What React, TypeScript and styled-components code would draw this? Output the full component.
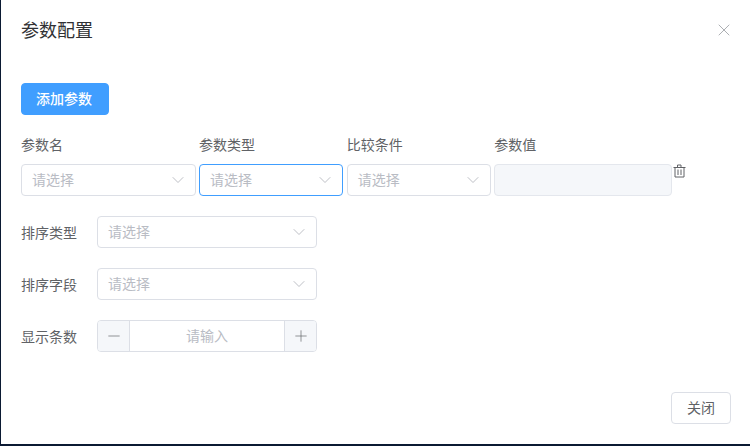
import styled, { createGlobalStyle } from "styled-components"
import { ChevronDown, Minus, Plus, X } from "lucide-react"

const GlobalStyle = createGlobalStyle`
    html, body {
        margin: 0;
        padding: 0;
        background: #0b1a33;
    }
    * {
        box-sizing: border-box;
    }
`;

const Dialog = styled.div`
    width: 749px;
    height: 444px;
    margin-left: 1px;
    background: #fff;
    display: flex;
    flex-direction: column;
    font-family: "Liberation Sans", "Noto Sans CJK SC", sans-serif;
    font-size: 14px;
    color: #606266;
    overflow: hidden;
`;

const Header = styled.div`
    height: 83px;
    padding: 20px 20px 0;
    display: flex;
    justify-content: space-between;
    align-items: flex-start;
`;

const Title = styled.span`
    font-size: 18px;
    line-height: 21px;
    margin-top: 1px;
    color: #303133;
`;

const CloseButton = styled.span`
    display: flex;
    margin: 0 -4px 0 0;
    color: #909399;
`;

const Body = styled.div`
    flex: 1;
    padding: 0 20px;
    display: flex;
    flex-direction: column;
    align-items: flex-start;
`;

const PrimaryButton = styled.button`
    width: 88px;
    height: 32px;
    padding: 0 2px 2px 0;
    background: #409eff;
    border: 1px solid #409eff;
    border-radius: 4px;
    color: #fff;
    font: inherit;
    font-weight: 500;
`;

const ParamGrid = styled.div`
    margin-top: 20px;
    display: grid;
    grid-template-columns: 174.6px 144.4px 144px 178px 16px;
    column-gap: 3.4px;
    row-gap: 9px;
`;

const ColumnLabel = styled.span`
    line-height: 20px;
    height: 20px;
`;

const SelectBox = styled.div<{ $focused?: boolean; $width?: string }>`
    width: ${props => props.$width || "100%"};
    height: 32px;
    padding: 0 10px;
    background: #fff;
    border: 1px solid ${props => props.$focused ? "#409eff" : "#dcdfe6"};
    border-radius: 4px;
    display: flex;
    align-items: center;
    justify-content: space-between;
    color: #b9bcc4;
    svg {
        margin-right: -3px;
    }
`;

const SelectText = styled.span`
    margin-top: -2px;
`;

const DisabledInput = styled.div`
    height: 32px;
    background: #f5f7fa;
    border: 1px solid #e4e7ed;
    border-radius: 4px;
`;

const TrashIcon = styled.svg`
    display: block;
    margin-left: -3px;
    color: #606266;
`;

const FormArea = styled.div`
    margin-top: 20px;
    display: flex;
    flex-direction: column;
    gap: 20px;
`;

const FormRow = styled.div`
    display: flex;
    align-items: center;
    height: 32px;
`;

const FormLabel = styled.span`
    width: 76px;
`;

const NumberInput = styled.div`
    width: 220px;
    height: 32px;
    border: 1px solid #dcdfe6;
    border-radius: 4px;
    display: flex;
    align-items: stretch;
`;

const StepButton = styled.span<{ $side: "left" | "right" }>`
    width: 32px;
    background: #f5f7fa;
    color: #606266;
    display: flex;
    align-items: center;
    justify-content: center;
    border-radius: ${props => props.$side === "left" ? "3px 0 0 3px" : "0 3px 3px 0"};
    ${props => props.$side === "left" ? "border-right" : "border-left"}: 1px solid #dcdfe6;
`;

const NumberPlaceholder = styled.span`
    flex: 1;
    text-align: center;
    line-height: 30px;
    color: #b9bcc4;
`;

const Footer = styled.div`
    padding: 0 19px 20px 0;
    display: flex;
    justify-content: flex-end;
`;

const DefaultButton = styled.button`
    width: 60px;
    height: 32px;
    padding: 0 0 2px;
    background: #fff;
    border: 1px solid #dcdfe6;
    border-radius: 4px;
    color: #606266;
    font: inherit;
`;

const Select = ({ focused, width }: { focused?: boolean; width?: string }) => (
    <SelectBox $focused={focused} $width={width}>
        <SelectText>请选择</SelectText>
        <ChevronDown size={20} strokeWidth={0.9} color="#a8abb2" />
    </SelectBox>
);

const App = () => {
    return (
        <>
            <GlobalStyle />
            <Dialog>
                <Header>
                    <Title>参数配置</Title>
                    <CloseButton><X size={20} strokeWidth={0.9} /></CloseButton>
                </Header>
                <Body>
                    <PrimaryButton type="button">添加参数</PrimaryButton>
                    <ParamGrid>
                        <ColumnLabel>参数名</ColumnLabel>
                        <ColumnLabel>参数类型</ColumnLabel>
                        <ColumnLabel>比较条件</ColumnLabel>
                        <ColumnLabel>参数值</ColumnLabel>
                        <span />
                        <Select />
                        <Select focused />
                        <Select />
                        <DisabledInput />
                        <TrashIcon width="14" height="15" viewBox="0 0 14 15" fill="none" stroke="currentColor" strokeWidth="1">
                            <path d="M0.5 3.5h12M4.5 3.5v-2.5h3.5v2.5M2 3.5v9.5h9v-9.5M5 5.5v5.5M8 5.5v5.5" />
                        </TrashIcon>
                    </ParamGrid>
                    <FormArea>
                        <FormRow>
                            <FormLabel>排序类型</FormLabel>
                            <Select width="220px" />
                        </FormRow>
                        <FormRow>
                            <FormLabel>排序字段</FormLabel>
                            <Select width="220px" />
                        </FormRow>
                        <FormRow>
                            <FormLabel>显示条数</FormLabel>
                            <NumberInput>
                                <StepButton $side="left"><Minus size={18} strokeWidth={0.9} /></StepButton>
                                <NumberPlaceholder>请输入</NumberPlaceholder>
                                <StepButton $side="right"><Plus size={18} strokeWidth={0.9} /></StepButton>
                            </NumberInput>
                        </FormRow>
                    </FormArea>
                </Body>
                <Footer>
                    <DefaultButton type="button">关闭</DefaultButton>
                </Footer>
            </Dialog>
        </>
    );
};

export default App;
